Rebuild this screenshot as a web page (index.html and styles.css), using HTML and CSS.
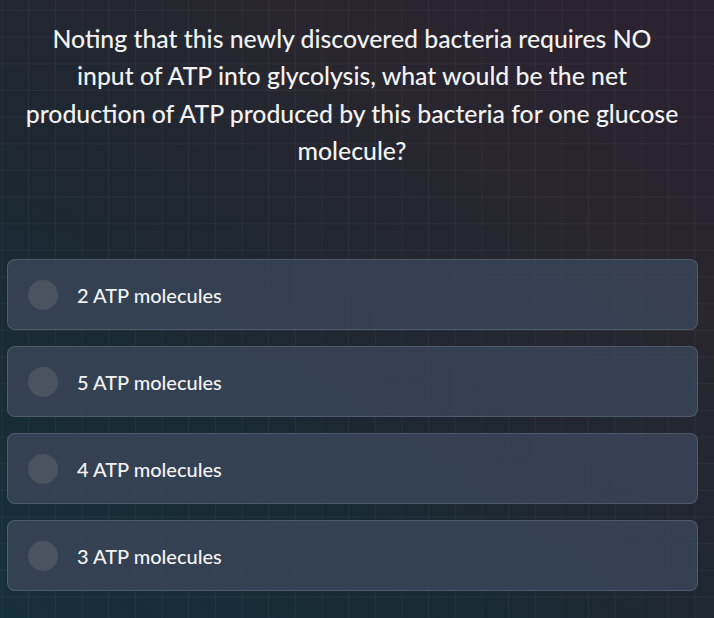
FILE: index.html
```html
<!DOCTYPE html>
<html lang="en">
<head>
<meta charset="utf-8">
<title>Quiz</title>
<link rel="stylesheet" href="styles.css">
</head>
<body>
<main class="quiz">
  <h1 class="question">Noting that this newly discovered bacteria requires NO input of ATP into glycolysis, what would be the net production of ATP produced by this bacteria for one glucose molecule?</h1>
  <ul class="options">
    <li class="option"><span class="radio"></span><span class="label">2 ATP molecules</span></li>
    <li class="option"><span class="radio"></span><span class="label">5 ATP molecules</span></li>
    <li class="option"><span class="radio"></span><span class="label">4 ATP molecules</span></li>
    <li class="option"><span class="radio"></span><span class="label">3 ATP molecules</span></li>
  </ul>
</main>
</body>
</html>
```

FILE: styles.css
```css
html, body {
  margin: 0;
  height: 100%;
}
body {
  font-family: Lato, "Open Sans", sans-serif;
  color: #f2f2f2;
  background-color: #1b2a33;
  background-image:
    linear-gradient(rgba(255,255,255,0.045) 1px, transparent 1px),
    linear-gradient(90deg, rgba(255,255,255,0.045) 1px, transparent 1px),
    linear-gradient(35deg, #16303a 0%, #1b2832 40%, #28262f 70%, #2b2230 100%);
  background-size: 26.67px 26.67px, 26.67px 26.67px, 100% 100%;
  background-position: 0 10px, 1.5px 0, 0 0;
  overflow: hidden;
}
.quiz {
  padding: 20px 16px 0 7px;
}
.question {
  margin: 0 17px 90px 16px;
  font-size: 24.8px;
  font-weight: 500;
  line-height: 37.33px;
  text-align: center;
}
.options {
  list-style: none;
  margin: 0;
  padding: 0;
  display: flex;
  flex-direction: column;
  gap: 16px;
}
.option {
  display: flex;
  align-items: center;
  height: 71px;
  box-sizing: border-box;
  padding-left: 20px;
  background: rgba(56, 68, 86, 0.88);
  border: 1px solid rgba(110, 122, 140, 0.45);
  border-radius: 8px;
}
.radio {
  width: 30px;
  height: 30px;
  border-radius: 50%;
  background: #4a5461;
  flex: none;
}
.label {
  margin-left: 19px;
  font-size: 20px;
  font-weight: 500;
}
```
